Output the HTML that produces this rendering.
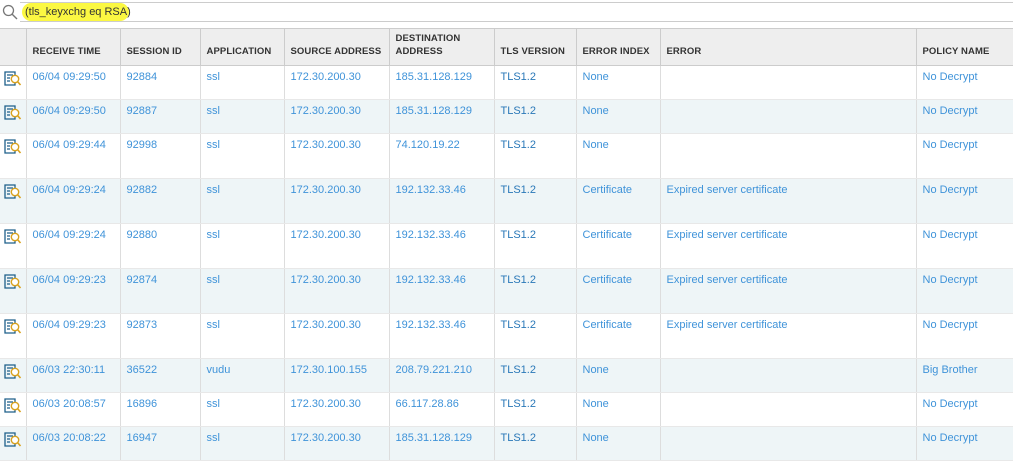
<!DOCTYPE html>
<html><head><meta charset="utf-8"><style>
*{margin:0;padding:0;box-sizing:border-box}
body{width:1013px;height:459px;overflow:hidden;background:#fff;font-family:"Liberation Sans",sans-serif;font-size:11px;position:relative}
.search{position:absolute;left:0;top:0;width:1013px;height:28px}
.bar{position:absolute;left:20px;top:2px;right:0;height:20px;border-top:1px solid #ccc;border-bottom:1px solid #ccc}
.pill{position:absolute;left:22px;top:3px;width:107px;height:18px;background:#fbf842;border-radius:9px;color:#333;font-size:11px;line-height:18px;padding-left:3px;white-space:nowrap}
table{position:absolute;left:0;top:28px;border-collapse:collapse;table-layout:fixed;width:1013px}
th{background:#eeeeee;color:#333;font-weight:bold;font-size:9.5px;letter-spacing:.1px;text-align:left;vertical-align:bottom;padding:0 6px 7px;height:37px;border-left:1px solid #ccc;border-top:1px solid #ccc;border-bottom:1px solid #ccc;line-height:13px;white-space:nowrap;overflow:hidden}
td{background:#fff;color:#3f93d9;vertical-align:top;padding:5px 6px 0;border-left:1px solid #ddd;border-bottom:1px solid #e8e8e8;line-height:13px;white-space:nowrap}
tr.b td{background:#eef5f7}
td:first-child,th:first-child{border-left:none;padding:5px 0 0 4px}
td.t{color:#2a78b8}
tr.s td{height:34px}tr.l td{height:45px}
</style></head><body>
<div class="search">
<svg style="position:absolute;left:2px;top:4px" width="16" height="16" viewBox="0 0 16 16"><circle cx="6.5" cy="6.5" r="5" fill="none" stroke="#777" stroke-width="1.3"/><line x1="10.2" y1="10.2" x2="15" y2="15" stroke="#777" stroke-width="1.4"/></svg>
<div class="bar"></div>
<div class="pill">(tls_keyxchg eq RSA)</div>
</div>
<table>
<colgroup><col style="width:26px"><col style="width:94px"><col style="width:80px"><col style="width:84px"><col style="width:105px"><col style="width:105px"><col style="width:82px"><col style="width:84px"><col style="width:256px"><col style="width:97px"></colgroup>
<tr><th></th><th>RECEIVE TIME</th><th>SESSION ID</th><th>APPLICATION</th><th>SOURCE ADDRESS</th><th>DESTINATION<br>ADDRESS</th><th>TLS VERSION</th><th>ERROR INDEX</th><th>ERROR</th><th>POLICY NAME</th></tr>
<tr class="s"><td><svg width="18" height="16" viewBox="0 0 18 16"><path d="M1 1h10v13H1z" fill="none" stroke="#1d5f8a" stroke-width="1.3"/><path d="M3 4h6M3 7h3M3 10h3" stroke="#1d5f8a" stroke-width="1.2"/><circle cx="11" cy="8" r="3.7" fill="#fff" stroke="#d9a21e" stroke-width="1.4"/><path d="M13.5 10.5l3 3.5" stroke="#d9a21e" stroke-width="1.6"/></svg></td><td>06/04 09:29:50</td><td>92884</td><td>ssl</td><td>172.30.200.30</td><td>185.31.128.129</td><td class="t">TLS1.2</td><td>None</td><td></td><td>No Decrypt</td></tr>
<tr class="s b"><td><svg width="18" height="16" viewBox="0 0 18 16"><path d="M1 1h10v13H1z" fill="none" stroke="#1d5f8a" stroke-width="1.3"/><path d="M3 4h6M3 7h3M3 10h3" stroke="#1d5f8a" stroke-width="1.2"/><circle cx="11" cy="8" r="3.7" fill="#fff" stroke="#d9a21e" stroke-width="1.4"/><path d="M13.5 10.5l3 3.5" stroke="#d9a21e" stroke-width="1.6"/></svg></td><td>06/04 09:29:50</td><td>92887</td><td>ssl</td><td>172.30.200.30</td><td>185.31.128.129</td><td class="t">TLS1.2</td><td>None</td><td></td><td>No Decrypt</td></tr>
<tr class="l"><td><svg width="18" height="16" viewBox="0 0 18 16"><path d="M1 1h10v13H1z" fill="none" stroke="#1d5f8a" stroke-width="1.3"/><path d="M3 4h6M3 7h3M3 10h3" stroke="#1d5f8a" stroke-width="1.2"/><circle cx="11" cy="8" r="3.7" fill="#fff" stroke="#d9a21e" stroke-width="1.4"/><path d="M13.5 10.5l3 3.5" stroke="#d9a21e" stroke-width="1.6"/></svg></td><td>06/04 09:29:44</td><td>92998</td><td>ssl</td><td>172.30.200.30</td><td>74.120.19.22</td><td class="t">TLS1.2</td><td>None</td><td></td><td>No Decrypt</td></tr>
<tr class="l b"><td><svg width="18" height="16" viewBox="0 0 18 16"><path d="M1 1h10v13H1z" fill="none" stroke="#1d5f8a" stroke-width="1.3"/><path d="M3 4h6M3 7h3M3 10h3" stroke="#1d5f8a" stroke-width="1.2"/><circle cx="11" cy="8" r="3.7" fill="#fff" stroke="#d9a21e" stroke-width="1.4"/><path d="M13.5 10.5l3 3.5" stroke="#d9a21e" stroke-width="1.6"/></svg></td><td>06/04 09:29:24</td><td>92882</td><td>ssl</td><td>172.30.200.30</td><td>192.132.33.46</td><td class="t">TLS1.2</td><td>Certificate</td><td>Expired server certificate</td><td>No Decrypt</td></tr>
<tr class="l"><td><svg width="18" height="16" viewBox="0 0 18 16"><path d="M1 1h10v13H1z" fill="none" stroke="#1d5f8a" stroke-width="1.3"/><path d="M3 4h6M3 7h3M3 10h3" stroke="#1d5f8a" stroke-width="1.2"/><circle cx="11" cy="8" r="3.7" fill="#fff" stroke="#d9a21e" stroke-width="1.4"/><path d="M13.5 10.5l3 3.5" stroke="#d9a21e" stroke-width="1.6"/></svg></td><td>06/04 09:29:24</td><td>92880</td><td>ssl</td><td>172.30.200.30</td><td>192.132.33.46</td><td class="t">TLS1.2</td><td>Certificate</td><td>Expired server certificate</td><td>No Decrypt</td></tr>
<tr class="l b"><td><svg width="18" height="16" viewBox="0 0 18 16"><path d="M1 1h10v13H1z" fill="none" stroke="#1d5f8a" stroke-width="1.3"/><path d="M3 4h6M3 7h3M3 10h3" stroke="#1d5f8a" stroke-width="1.2"/><circle cx="11" cy="8" r="3.7" fill="#fff" stroke="#d9a21e" stroke-width="1.4"/><path d="M13.5 10.5l3 3.5" stroke="#d9a21e" stroke-width="1.6"/></svg></td><td>06/04 09:29:23</td><td>92874</td><td>ssl</td><td>172.30.200.30</td><td>192.132.33.46</td><td class="t">TLS1.2</td><td>Certificate</td><td>Expired server certificate</td><td>No Decrypt</td></tr>
<tr class="l"><td><svg width="18" height="16" viewBox="0 0 18 16"><path d="M1 1h10v13H1z" fill="none" stroke="#1d5f8a" stroke-width="1.3"/><path d="M3 4h6M3 7h3M3 10h3" stroke="#1d5f8a" stroke-width="1.2"/><circle cx="11" cy="8" r="3.7" fill="#fff" stroke="#d9a21e" stroke-width="1.4"/><path d="M13.5 10.5l3 3.5" stroke="#d9a21e" stroke-width="1.6"/></svg></td><td>06/04 09:29:23</td><td>92873</td><td>ssl</td><td>172.30.200.30</td><td>192.132.33.46</td><td class="t">TLS1.2</td><td>Certificate</td><td>Expired server certificate</td><td>No Decrypt</td></tr>
<tr class="s b"><td><svg width="18" height="16" viewBox="0 0 18 16"><path d="M1 1h10v13H1z" fill="none" stroke="#1d5f8a" stroke-width="1.3"/><path d="M3 4h6M3 7h3M3 10h3" stroke="#1d5f8a" stroke-width="1.2"/><circle cx="11" cy="8" r="3.7" fill="#fff" stroke="#d9a21e" stroke-width="1.4"/><path d="M13.5 10.5l3 3.5" stroke="#d9a21e" stroke-width="1.6"/></svg></td><td>06/03 22:30:11</td><td>36522</td><td>vudu</td><td>172.30.100.155</td><td>208.79.221.210</td><td class="t">TLS1.2</td><td>None</td><td></td><td>Big Brother</td></tr>
<tr class="s"><td><svg width="18" height="16" viewBox="0 0 18 16"><path d="M1 1h10v13H1z" fill="none" stroke="#1d5f8a" stroke-width="1.3"/><path d="M3 4h6M3 7h3M3 10h3" stroke="#1d5f8a" stroke-width="1.2"/><circle cx="11" cy="8" r="3.7" fill="#fff" stroke="#d9a21e" stroke-width="1.4"/><path d="M13.5 10.5l3 3.5" stroke="#d9a21e" stroke-width="1.6"/></svg></td><td>06/03 20:08:57</td><td>16896</td><td>ssl</td><td>172.30.200.30</td><td>66.117.28.86</td><td class="t">TLS1.2</td><td>None</td><td></td><td>No Decrypt</td></tr>
<tr class="s b"><td><svg width="18" height="16" viewBox="0 0 18 16"><path d="M1 1h10v13H1z" fill="none" stroke="#1d5f8a" stroke-width="1.3"/><path d="M3 4h6M3 7h3M3 10h3" stroke="#1d5f8a" stroke-width="1.2"/><circle cx="11" cy="8" r="3.7" fill="#fff" stroke="#d9a21e" stroke-width="1.4"/><path d="M13.5 10.5l3 3.5" stroke="#d9a21e" stroke-width="1.6"/></svg></td><td>06/03 20:08:22</td><td>16947</td><td>ssl</td><td>172.30.200.30</td><td>185.31.128.129</td><td class="t">TLS1.2</td><td>None</td><td></td><td>No Decrypt</td></tr>
</table>
</body></html>
